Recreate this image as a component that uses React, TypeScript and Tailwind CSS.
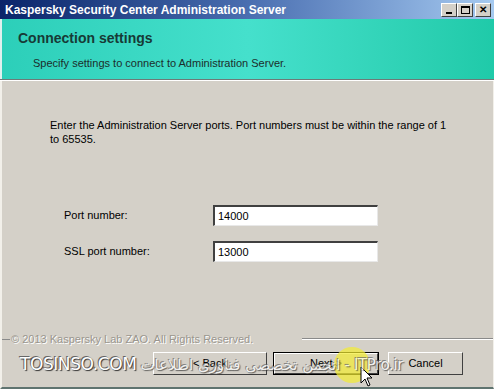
import React from "react";

const font = { fontFamily: '"Liberation Sans", Arial, sans-serif' };

function WinBtn({ children }: { children: React.ReactNode }) {
  return (
    <div className="w-[16px] h-[14px] bg-[#d4d0c8] border border-t-white border-l-white border-r-[#404040] border-b-[#404040] flex items-center justify-center text-[10px] font-bold text-black leading-none">
      {children}
    </div>
  );
}

function Field({ label, value }: { label: string; value: string }) {
  return (
    <div className="flex items-center h-[21px]">
      <div className="w-[149px] text-[11px] text-black">{label}</div>
      <div className="w-[165px] h-[21px] bg-white border-t-2 border-l-2 border-t-[#404040] border-l-[#404040] border-r border-b border-r-[#e8e8e8] border-b-[#e8e8e8] flex items-center pl-[3px] text-[11px] text-black">
        {value}
      </div>
    </div>
  );
}

function Btn({ children, def = false, w }: { children: React.ReactNode; def?: boolean; w: string }) {
  return (
    <div className={`${w} h-[23px] ${def ? "border border-black" : ""}`}>
      <div className="w-full h-full bg-[#d4d0c8] border border-t-white border-l-white border-r-[#404040] border-b-[#404040] flex items-center justify-center text-[11px] text-black">
        {children}
      </div>
    </div>
  );
}

export default function App() {
  return (
    <div style={font} className="w-[494px] h-[389px] bg-[#d4d0c8] flex flex-col relative overflow-hidden">
      {/* Title bar */}
      <div className="h-[19px] shrink-0 bg-gradient-to-r from-[#0a246a] via-[#4a6eb0] to-[#a6caf0] flex items-center pl-[5px] pr-[3px]">
        <div className="flex-1 text-white font-bold text-[12px]">Kaspersky Security Center Administration Server</div>
        <div className="flex items-center">
          <WinBtn><span className="mt-[6px] w-[6px] h-[2px] bg-black block" /></WinBtn>
          <WinBtn><span className="w-[9px] h-[8px] border border-black border-t-2 block" /></WinBtn>
          <div className="ml-[2px]"><WinBtn>✕</WinBtn></div>
        </div>
      </div>
      {/* Header */}
      <div className="h-[60px] shrink-0 bg-gradient-to-r from-[#2ccfb9] via-[#45e0cc] to-[#1fcaa9] border-l-2 border-l-[#e0f0ee] pl-[16px] pt-[9px]">
        <div className="text-[14px] font-bold text-[#173a36]">Connection settings</div>
        <div className="text-[11px] text-[#1c2e2c] pl-[15px] mt-[6px]">Specify settings to connect to Administration Server.</div>
      </div>
      <div className="h-px shrink-0 bg-[#6e7a78]" />
      <div className="h-px shrink-0 bg-white" />
      {/* Body */}
      <div className="flex-1 flex flex-col border-l-2 border-l-[#f2f0ea] border-r border-r-[#f2f0ea] border-b-2 border-b-[#5f7470]">
        <div className="pl-[48px] pt-[37px] text-[11px] leading-[14px] text-black">
          Enter the Administration Server ports. Port numbers must be within the range of 1
          <br />
          to 65535.
        </div>
        <div className="pl-[62px] mt-[59px] flex flex-col gap-[15px]">
          <Field label="Port number:" value="14000" />
          <Field label="SSL port number:" value="13000" />
        </div>
        <div className="flex-1" />
        <div className="flex items-center h-[14px]">
          <div className="w-[8px] h-px bg-[#8a8a8a]" />
          <div className="text-[11px] text-[#9a968e] px-[1px]" style={{ textShadow: "1px 1px 0 #fff" }}>
            © 2013 Kaspersky Lab ZAO. All Rights Reserved.
          </div>
          <div className="flex-1 ml-[48px] border-t border-t-[#8a8a8a] border-b border-b-white" />
        </div>
        <div className="flex items-center pl-[151px] mt-[6px] mb-[12px]">
          <Btn w="w-[114px]">&lt; Back</Btn>
          <div className="w-[6px]" />
          <Btn w="w-[106px]" def>Next &gt;</Btn>
          <div className="w-[9px]" />
          <Btn w="w-[75px]">Cancel</Btn>
        </div>
      </div>

      {/* Cursor highlight */}
      <div className="absolute left-[334px] top-[347px] w-[36px] h-[36px] rounded-full bg-[#f4ec30] opacity-70" />
      <svg className="absolute left-[360px] top-[366px]" width="14" height="22" viewBox="0 0 14 22">
        <path d="M1 1 L1 17 L5 13 L8 20 L10 19 L7 12 L12 12 Z" fill="#fff" stroke="#000" strokeWidth="1" />
      </svg>

      {/* Watermark */}
      <div
        className="absolute left-[20px] top-[352px] flex items-center gap-[4px] text-white text-[17px] tracking-tight pointer-events-none"
        style={{ textShadow: "1px 1px 1px #333, -1px -1px 0 #666", fontFamily: '"DejaVu Sans", "Noto Sans", sans-serif' }}
      >
        <span>TOSINSO.COM</span>
        <span dir="rtl" className="opacity-70 text-[15px]">ITPro.ir - انجمن تخصصی فناوری اطلاعات</span>
      </div>
    </div>
  );
}
